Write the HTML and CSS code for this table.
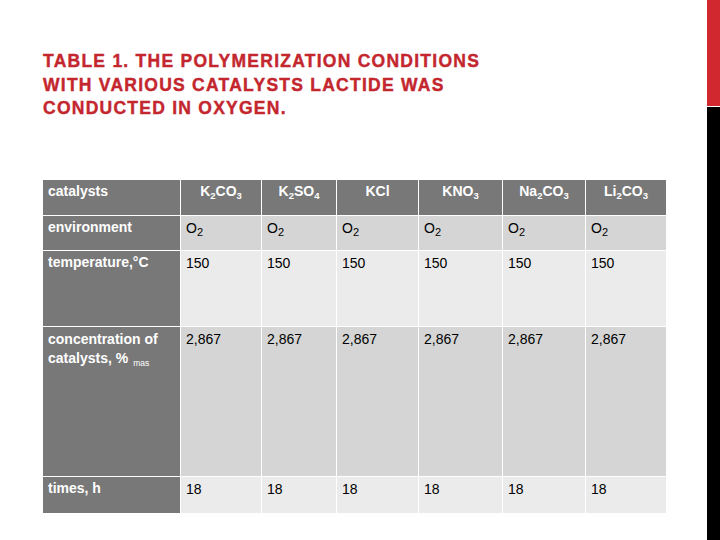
FILE: index.html
```html
<!DOCTYPE html>
<html>
<head>
<meta charset="utf-8">
<link rel="stylesheet" href="styles.css">
</head>
<body>
<div class="slide">
  <main class="content">
    <h1 class="title">TABLE 1. THE POLYMERIZATION CONDITIONS WITH VARIOUS CATALYSTS LACTIDE WAS CONDUCTED IN OXYGEN.</h1>
    <table class="data">
      <colgroup>
        <col class="c0"><col class="c1"><col class="c2"><col class="c3"><col class="c4"><col class="c5"><col class="c6">
      </colgroup>
      <tr class="r-head">
        <th class="lead">catalysts</th>
        <th>K<sub>2</sub>CO<sub>3</sub></th>
        <th>K<sub>2</sub>SO<sub>4</sub></th>
        <th>KCl</th>
        <th>KNO<sub>3</sub></th>
        <th>Na<sub>2</sub>CO<sub>3</sub></th>
        <th>Li<sub>2</sub>CO<sub>3</sub></th>
      </tr>
      <tr class="r-env dark">
        <th class="lead">environment</th>
        <td>O<sub>2</sub></td><td>O<sub>2</sub></td><td>O<sub>2</sub></td><td>O<sub>2</sub></td><td>O<sub>2</sub></td><td>O<sub>2</sub></td>
      </tr>
      <tr class="r-temp light">
        <th class="lead">temperature,°C</th>
        <td>150</td><td>150</td><td>150</td><td>150</td><td>150</td><td>150</td>
      </tr>
      <tr class="r-conc dark">
        <th class="lead"><span class="line">concentration of</span><span class="line">catalysts, %<span class="unit">mas</span></span></th>
        <td>2,867</td><td>2,867</td><td>2,867</td><td>2,867</td><td>2,867</td><td>2,867</td>
      </tr>
      <tr class="r-time light">
        <th class="lead">times, h</th>
        <td>18</td><td>18</td><td>18</td><td>18</td><td>18</td><td>18</td>
      </tr>
    </table>
  </main>
  <aside class="edge">
    <div class="edge-red"></div>
    <div class="edge-black"></div>
  </aside>
</div>
</body>
</html>
```

FILE: styles.css
```css
html, body {
  margin: 0;
  padding: 0;
  background: #ffffff;
}

.slide {
  display: flex;
  width: 720px;
  height: 540px;
  overflow: hidden;
  font-family: "Liberation Sans", Arial, sans-serif;
}

.content {
  flex: 1;
  padding: 50px 0 0 43px;
}

.title {
  margin: 0;
  width: 480px;
  font-size: 17.5px;
  line-height: 23.5px;
  font-weight: bold;
  letter-spacing: 1.25px;
  color: #c4262e;
  -webkit-text-stroke: 0.4px #c4262e;
}

.data {
  margin: 58px 0 0 -1px;
  border-collapse: separate;
  border-spacing: 1px;
  table-layout: fixed;
  width: 625px;
  font-size: 14px;
  line-height: 18px;
}

.c0 { width: 137px; }
.c1 { width: 80px; }
.c2 { width: 74px; }
.c3 { width: 81px; }
.c4 { width: 83px; }
.c5 { width: 82px; }
.c6 { width: 80px; }

th, td {
  padding: 0;
  vertical-align: top;
  text-align: left;
}

th {
  background: #787878;
  color: #ffffff;
  font-weight: bold;
}

.r-head th {
  height: 35px;
  padding-top: 2px;
  text-align: center;
  box-sizing: border-box;
}

.r-head th.lead {
  text-align: left;
}

.lead {
  padding-left: 5px;
  padding-top: 2px;
  box-sizing: border-box;
}

td {
  color: #000000;
  padding: 3px 0 0 5px;
  box-sizing: border-box;
}

.dark td { background: #d5d5d5; }
.light td { background: #ebebeb; }

.r-env th, .r-env td { height: 34px; }
.r-temp th, .r-temp td { height: 75px; }
.r-conc th, .r-conc td { height: 149px; }
.r-time th, .r-time td { height: 36px; }

.r-conc th.lead { line-height: 19px; padding-top: 3px; }

.line {
  display: block;
  white-space: nowrap;
}

sub {
  font-size: 9.5px;
  line-height: 0;
  vertical-align: -3px;
}

td sub {
  font-size: 11px;
}

.unit {
  font-weight: normal;
  font-size: 8.5px;
  line-height: 0;
  margin-left: 5px;
  vertical-align: -3px;
}

.edge {
  width: 13px;
  display: flex;
  flex-direction: column;
}

.edge-red {
  height: 106px;
  background: #d0282e;
}

.edge-black {
  flex: 1;
  margin-top: 1px;
  background: #000000;
}
```
